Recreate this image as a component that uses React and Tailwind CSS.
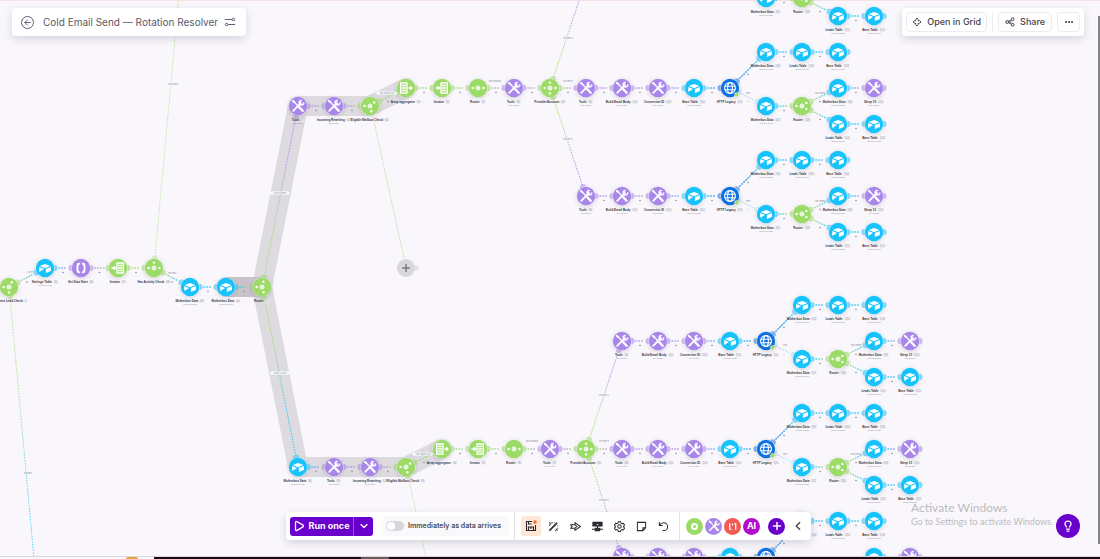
import { ArrowLeft, ChevronDown, ChevronLeft, Lightbulb, Play, Plus } from "lucide-react";

const COLORS = {
  table: "#18c3fb",
  tools: "#a987ea",
  json: "#a987ea",
  router: "#9bdb66",
  aggregator: "#9bdb66",
  iterator: "#9bdb66",
  http: "#0f72e0",
};

// every mailbox branch has the same modules, only its origin changes
function delivery(x, y) {
  const s = 36;
  const h = x + 4 * s;
  const nodes = [
    { x, y, type: "tools", label: "Tools", n: 84 },
    { x: x + s, y, type: "tools", label: "Build Email Body", n: 112 },
    { x: x + 2 * s, y, type: "tools", label: "Conversion ID", n: 113 },
    { x: x + 3 * s, y, type: "table", label: "Base Table", n: 114 },
    { x: h, y, type: "http", label: "HTTP Legacy", n: 115 },
    { x: h + s, y: y - 36, type: "table", label: "Motherbox Data", n: 132 },
    { x: h + 2 * s, y: y - 36, type: "table", label: "Leads Table", n: 133 },
    { x: h + 3 * s, y: y - 36, type: "table", label: "Base Table", n: 134, end: true },
    { x: h + s, y: y + 18, type: "table", label: "Motherbox Data", n: 117 },
    { x: h + 2 * s, y: y + 18, type: "router", label: "Router", n: 118, dots: [180, 35, -35] },
    { x: h + 3 * s, y, type: "table", label: "Motherbox Data", n: 119 },
    { x: h + 4 * s, y, type: "tools", label: "Sleep 10", n: 120, end: true },
    { x: h + 3 * s, y: y + 36, type: "table", label: "Leads Table", n: 121 },
    { x: h + 4 * s, y: y + 36, type: "table", label: "Base Table", n: 122, end: true },
  ];
  const pairs = [[0, 1], [1, 2], [2, 3], [3, 4], [4, 5], [5, 6], [6, 7], [4, 8, 0.3], [8, 9], [9, 10], [10, 11], [9, 12], [12, 13]];
  return { nodes, edges: pairs.map(([a, b, o]) => ({ a: nodes[a], b: nodes[b], opacity: o })) };
}

const start = [
  { x: 9, y: 287, type: "router", label: "Determine Lead Check", n: 2, dots: [180, 90, -60] },
  { x: 45, y: 268, type: "table", label: "Settings Table", n: 45 },
  { x: 81, y: 268, type: "json", label: "Set Data Start", n: 46 },
  { x: 118, y: 268, type: "iterator", label: "Iterator", n: 47 },
  { x: 154, y: 268, type: "router", label: "Has Activity Check", n: 48, dots: [180, 0, -90] },
  { x: 190, y: 287, type: "table", label: "Motherbox Data", n: 49 },
  { x: 226, y: 287, type: "table", label: "Motherbox Data", n: 50 },
  { x: 262, y: 287, type: "router", label: "Router", n: 51, dots: [180, 75, -75] },
];

const upper = [
  { x: 298, y: 106, type: "tools", label: "Tools", n: 8 },
  { x: 334, y: 106, type: "tools", label: "Incoming Rewriting", n: 63 },
  { x: 370, y: 106, type: "router", label: "Eligible Mailbox Check", n: 64, dots: [180, -40, 75] },
  { x: 406, y: 88, type: "aggregator", label: "Array aggregator", n: 65 },
  { x: 442, y: 88, type: "iterator", label: "Iterator", n: 66 },
  { x: 478, y: 88, type: "router", label: "Router", n: 67, dots: [180, 0] },
  { x: 514, y: 88, type: "tools", label: "Tools", n: 68 },
  { x: 550, y: 88, type: "router", label: "Provider/Account", n: 69, dots: [180, 0, 90, -90] },
];

const lower = [
  { x: 298, y: 467, type: "table", label: "Motherbox Data", n: 90 },
  { x: 334, y: 467, type: "tools", label: "Tools", n: 91 },
  { x: 370, y: 467, type: "tools", label: "Incoming Rewriting", n: 92 },
  { x: 406, y: 467, type: "router", label: "Eligible Mailbox Check", n: 93, dots: [180, -40, 75] },
  { x: 442, y: 449, type: "aggregator", label: "Array aggregator", n: 94 },
  { x: 478, y: 449, type: "iterator", label: "Iterator", n: 95 },
  { x: 514, y: 449, type: "router", label: "Router", n: 96, dots: [180, 0] },
  { x: 550, y: 449, type: "tools", label: "Tools", n: 97 },
  { x: 586, y: 449, type: "router", label: "Provider/Account", n: 98, dots: [180, 0, 90, -90] },
];

const branches = [
  delivery(586, -20),
  delivery(586, 88),
  delivery(586, 196),
  delivery(622, 341),
  delivery(622, 449),
  delivery(622, 557),
];

const chain = (list) => list.slice(1).map((b, i) => ({ a: list[i], b }));

// modules scrolled out above the canvas are not rendered
const nodes = [...start, ...upper, ...lower, ...branches.flatMap((b) => b.nodes)].filter((n) => n.y > -12 && n.y < 570);

const edges = [
  ...chain(start),
  ...chain(upper),
  ...chain(lower),
  { a: start[7], b: upper[0] },
  { a: start[7], b: lower[0] },
  { a: upper[7], b: branches[0].nodes[0] },
  { a: upper[7], b: branches[1].nodes[0] },
  { a: upper[7], b: branches[2].nodes[0] },
  { a: lower[8], b: branches[3].nodes[0] },
  { a: lower[8], b: branches[4].nodes[0] },
  { a: lower[8], b: branches[5].nodes[0] },
  { a: start[4], b: { x: 184, y: -60, type: "router" }, opacity: 0.7 },
  { a: start[0], b: { x: 36, y: 580, type: "table" }, opacity: 0.8 },
  { a: lower[3], b: { x: 442, y: 629, type: "router" }, opacity: 0.7 },
  ...branches.flatMap((b) => b.edges),
];

const routeLabels = [
  { x: 280, y: 193, text: "Cold outreach", pill: true },
  { x: 280, y: 373, text: "Follow up due", pill: true },
  { x: 387, y: 93, text: "Has eligible box", pill: true },
  { x: 423, y: 454, text: "Has eligible box", pill: true },
  { x: 173, y: 84, text: "No record" },
  { x: 28, y: 473, text: "Fallback" },
  { x: 30, y: 272, text: "Active" },
  { x: 172, y: 273, text: "Has lead" },
  { x: 568, y: 38, text: "Provider A" },
  { x: 568, y: 139, text: "Provider C" },
  { x: 495, y: 81, text: "Next mailbox" },
  { x: 568, y: 81, text: "Provider B" },
  { x: 532, y: 441, text: "Next mailbox" },
  { x: 604, y: 395, text: "Provider A" },
  { x: 604, y: 441, text: "Provider B" },
  { x: 604, y: 500, text: "Provider C" },
  { x: 748, y: 93, text: "Sent" },
  { x: 748, y: 201, text: "Sent" },
  { x: 785, y: 345, text: "Sent" },
  { x: 785, y: 454, text: "Sent" },
  { x: 820, y: 93, text: "Has thread" },
  { x: 820, y: 201, text: "Has thread" },
  { x: 856, y: 345, text: "Has thread" },
  { x: 856, y: 454, text: "Has thread" },
];

function Edge({ a, b, opacity = 1, index }) {
  const len = Math.hypot(b.x - a.x, b.y - a.y);
  const ux = (b.x - a.x) / len;
  const uy = (b.y - a.y) / len;
  const long = len > 60;
  const gap = long ? 12 : 14;
  return (
    <g opacity={opacity}>
      <linearGradient id={`edge-${index}`} gradientUnits="userSpaceOnUse" x1={a.x} y1={a.y} x2={b.x} y2={b.y}>
        <stop offset="0.3" stopColor={COLORS[a.type]} />
        <stop offset="0.7" stopColor={COLORS[b.type]} />
      </linearGradient>
      <circle cx={a.x + ux * 9.6} cy={a.y + uy * 9.6} r="3" fill={COLORS[a.type]} opacity="0.5" />
      <circle cx={b.x - ux * 9.6} cy={b.y - uy * 9.6} r="3" fill={COLORS[b.type]} opacity="0.5" />
      <line
        x1={a.x + ux * gap}
        y1={a.y + uy * gap}
        x2={b.x - ux * gap}
        y2={b.y - uy * gap}
        stroke={`url(#edge-${index})`}
        strokeWidth={long ? 1.1 : 1.4}
        strokeLinecap="round"
        strokeDasharray={long ? "0.8 2" : "0.6 2.2"}
        opacity={long ? 0.75 : 0.85}
      />
      {!long && <circle cx={(a.x + b.x) / 2} cy={(a.y + b.y) / 2 + 4.5} r="0.8" fill="#8d8b96" />}
    </g>
  );
}

function Glyph({ type, dots = [] }) {
  if (type === "table")
    return (
      <g fill="#fff">
        <path d="M-5.2-1.9 0-4l5.4 2L.1.2z" />
        <path d="M.9 1.1 5.9-.9V3L.9 5z" />
        <path d="M-5.8-1-.9.9-5.8 3.9z" />
      </g>
    );
  if (type === "tools")
    return (
      <g stroke="#fff" fill="none" strokeLinecap="round">
        <path d="M-4.3-4.6 0 0" strokeWidth="1.2" />
        <path d="M-5.3-5.2-3.6-3.8" strokeWidth="1.8" />
        <path d="M1.3 1.3 4.6 4.8" strokeWidth="2.4" />
        <path d="M-4.8 4.8 3 -3" strokeWidth="1.8" />
        <path d="M3.2-5.6A2.3 2.3 0 1 0 5.8-3" strokeWidth="1.5" />
      </g>
    );
  if (type === "json")
    return (
      <g stroke="#fff" fill="none" strokeWidth="1.9" strokeLinecap="round">
        <path d="M-1.8-4.2h-.4q-1.2 0-1.2 1.2v1.5Q-3.4 0-4.6 0q1.2 0 1.2 1.5v1.5q0 1.2 1.2 1.2h.4" />
        <path d="M1.8-4.2h.4q1.2 0 1.2 1.2v1.5Q3.4 0 4.6 0 3.4 0 3.4 1.5v1.5q0 1.2-1.2 1.2h-.4" />
      </g>
    );
  if (type === "http")
    return (
      <g stroke="#fff" fill="none" strokeWidth="1.1">
        <circle r="5.4" />
        <ellipse rx="2.4" ry="5.4" />
        <path d="M-5.2-1.8H5.2M-5.2 1.8H5.2" />
      </g>
    );
  if (type === "router")
    return (
      <g fill="#fff">
        <circle r="2.5" opacity="0.75" />
        {dots.map((deg) => (
          <circle
            key={deg}
            cx={5.4 * Math.cos((deg * Math.PI) / 180)}
            cy={5.4 * Math.sin((deg * Math.PI) / 180)}
            r="1.2"
          />
        ))}
      </g>
    );
  // aggregator points out of the sheet, iterator points into it
  return type === "aggregator" ? (
    <g>
      <path d="M-5.4-5H1V5h-6.400z" fill="none" stroke="#fff" strokeWidth="1.3" />
      <path d="M-4.500-2.500H0M-4.500 0H0M-4.500 2.500H0" stroke="#fff" strokeWidth="1.5" />
      <path d="M2.400 0h3.400M4.200-1.800 6 0 4.200 1.800" stroke="#fff" strokeWidth="1.3" fill="none" />
    </g>
  ) : (
    <g>
      <path d="M-1-5h6.400V5H-1z" fill="none" stroke="#fff" strokeWidth="1.3" />
      <path d="M0-2.500h4.500M0 0h4.500M0 2.500h4.500" stroke="#fff" strokeWidth="1.5" />
      <path d="M-6.600 0h4M-4.200-1.800-2.400 0-4.200 1.800" stroke="#fff" strokeWidth="1.3" fill="none" />
    </g>
  );
}

function Module({ node }) {
  // the lowest row is cut by the window edge, its captions are out of view
  const captioned = node.y < 545;
  return (
    <div
      className="absolute flex w-9 -translate-x-1/2 flex-col items-center"
      style={{ left: node.x, top: node.y - 10 }}
    >
      <svg viewBox="-10 -10 20 20" className="size-5 shrink-0 overflow-visible drop-shadow-sm">
        <circle r="9.8" fill="#f9f7fb" opacity="0.6" />
        <circle r="9.2" fill={COLORS[node.type]} />
        <Glyph type={node.type} dots={node.dots} />
        {node.type === "http" && <circle cx="6.6" cy="6.6" r="2.2" fill="#9bdb66" stroke="#e9f7dc" strokeWidth="0.5" />}
      </svg>
      {captioned && (
        <div className="mt-[2px] flex items-center gap-px font-['Liberation_Sans',sans-serif] whitespace-nowrap text-[3px] leading-[4px] font-bold text-[#3a3843]">
          <span>{node.label}</span>
          <span className="rounded-full bg-[#efedf2] px-px font-normal text-[#a3a1ab]">{node.n}</span>
        </div>
      )}
      {captioned && (node.type === "table" || node.type === "tools") && (
        <div className="font-['Liberation_Sans',sans-serif] whitespace-nowrap text-[2px] leading-[3px] text-[#8d8b96]">
          {node.type === "table" ? "Search records" : "Set variable"}
        </div>
      )}
    </div>
  );
}

function Canvas() {
  return (
    <div className="absolute inset-0 overflow-hidden">
      <svg className="absolute inset-0 h-full w-full">
        <g fill="none" stroke="#dddbdf" strokeWidth="20" strokeLinejoin="round" strokeLinecap="round">
          <path d="M406 88 370 106H298L262 287 298 467H406L442 449" />
          <path d="M226 287H262" stroke="#c7c3c9" />
        </g>
        {edges.map((e, i) => (
          <Edge key={i} index={i} {...e} />
        ))}
        {nodes.filter((n) => n.end).map((n) => (
          <circle key={`${n.x}-${n.y}`} cx={n.x + 9.6} cy={n.y} r="3" fill={COLORS[n.type]} opacity="0.5" />
        ))}
        <path d="M373 117 404 258" stroke="#c3e2a8" strokeWidth="1" strokeDasharray="1.5 1" />
        <circle cx="416" cy="268" r="3" fill="#e6e4e8" />
        <circle cx="406" cy="268" r="9" fill="#d9d7da" />
        <path d="M402 268h8M406 264v8" stroke="#55535b" strokeWidth="1" />
      </svg>
      {routeLabels.map((l) => (
        <span
          key={`${l.x}-${l.y}`}
          style={{ left: l.x, top: l.y }}
          className={`absolute -translate-x-1/2 -translate-y-1/2 whitespace-nowrap rounded-full text-[2px] leading-[3px] text-[#8d8b96] ${l.pill ? "bg-white px-[3px]" : "bg-[#f9f7fb]"}`}
        >
          {l.text}
        </span>
      ))}
      {nodes.map((n) => (
        <Module key={`${n.x}-${n.y}`} node={n} />
      ))}
    </div>
  );
}

function TopBar() {
  return (
    <header className="relative flex items-start justify-between pt-2 pr-4 pl-3">
      <div className="flex h-7 items-center rounded bg-white pr-[10px] pl-[9px] shadow-[0_3px_8px_rgba(40,30,60,0.16)]">
        <button aria-label="Back" className="flex size-[13px] items-center justify-center rounded-full border border-[#5c5a70] text-[#5c5a70]">
          <ArrowLeft className="size-[9px]" strokeWidth={2.5} />
        </button>
        <h1 className="ml-[9px] text-[10px] leading-4 text-[#5b5966]">Cold Email Send — Rotation Resolver</h1>
        <button aria-label="Scenario inputs" className="ml-[6px] text-[#5c5a70]">
          <svg viewBox="0 0 12 12" className="size-3" fill="none" stroke="currentColor" strokeWidth="1">
            <path d="M1 3.5h7M4 8.5h7" />
            <circle cx="9.4" cy="3.5" r="1.3" />
            <circle cx="2.6" cy="8.5" r="1.3" />
          </svg>
        </button>
      </div>

      <div className="flex h-7 items-center gap-[5px] rounded bg-white px-1 text-[9px] font-medium text-[#45434e] shadow-[0_3px_8px_rgba(40,30,60,0.16)]">
        <button className="flex h-5 items-center gap-[5px] rounded-sm border border-[#ececf0] px-[5px]">
          <svg viewBox="0 0 12 12" className="size-[10px]" fill="none" stroke="currentColor" strokeWidth="1.2">
            <path d="M6 1.2 7.5 3v1.5H9L10.8 6 9 7.5H7.5V9L6 10.8 4.5 9V7.5H3L1.2 6 3 4.5h1.5V3z" />
          </svg>
          Open in Grid
        </button>
        <span className="h-5 w-px bg-[#ececf0]" />
        <button className="flex h-5 items-center gap-[5px] rounded-sm border border-[#ececf0] px-[6px]">
          <svg viewBox="0 0 12 12" className="size-[10px]" fill="none" stroke="currentColor" strokeWidth="1.2">
            <circle cx="2.6" cy="6" r="1.7" />
            <circle cx="9.2" cy="2.7" r="1.7" />
            <circle cx="9.2" cy="9.3" r="1.7" />
            <path d="m4.1 5.2 3.6-1.8M4.3 6h3.5M4.1 6.8l3.6 1.8" />
          </svg>
          Share
        </button>
        <button aria-label="More" className="flex h-5 w-[23px] items-center justify-center gap-px rounded-sm border border-[#ececf0]">
          <span className="size-[2px] rounded-full bg-[#33313b]" />
          <span className="size-[2px] rounded-full bg-[#33313b]" />
          <span className="size-[2px] rounded-full bg-[#33313b]" />
        </button>
      </div>
    </header>
  );
}

const tools = [
  {
    name: "Auto-align",
    icon: (
      <>
        <path d="m1.5 10.5 8.5-8.5" strokeWidth="1.8" />
        <path d="M1.5 1.5l2 2M4.5 1v1.5M1 4.5h1.5M8.5 8.5l2 2M8 10v1.2M10 8h1.2M7 1.5l.5.5M10.5 5l.5.5" />
      </>
    ),
  },
  {
    name: "Explain flow",
    icon: <path d="M.8 4.2h4.7V1.8L11.3 6l-5.8 4.2V7.8H.8L2.3 6zM5.5 4.2 7.5 6l-2 1.8" />,
  },
  {
    name: "Notes",
    icon: (
      <>
        <path d="M1 1.5h10v4H1zM3.5 8h5v2.5h-5z" fill="currentColor" />
        <path d="M0 9h3.5M8.5 9H12M6 5v3" />
        <path d="M4.8 4.3 6 3l1.2 1.3z" fill="#fff" stroke="none" />
      </>
    ),
  },
  {
    name: "Settings",
    icon: (
      <>
        <path d="M4.8.8h2.4l.4 1.4 1.4.8 1.4-.4 1.1 2-1 1.1v.9l1 1.1-1.1 2-1.4-.4-1.4.8-.4 1.3H4.8l-.4-1.3L3 9.3l-1.4.4-1.1-2 1-1.1v-.9l-1-1.1 1.1-2L3 3l1.4-.8z" />
        <circle cx="6" cy="6.1" r="1.9" />
      </>
    ),
  },
  {
    name: "Sticky note",
    icon: <path d="M1.5 1.5h9v6l-3 3h-6zM10.5 7.5h-3v3" />,
  },
  {
    name: "Undo",
    icon: <path d="M1.5 1.2v3.6h3.6M1.7 4.6C2.8 2.8 4.5 2 6.3 2a4.2 4.2 0 1 1 0 8.4H5" />,
  },
];

function Toolbar() {
  return (
    <div className="flex h-7 items-center rounded-sm bg-white pr-[7px] pl-1 shadow-[0_3px_8px_rgba(40,30,60,0.16)]">
      <div className="flex h-[19px] overflow-hidden rounded-[3px] bg-[#6a00cc] text-white">
        <button className="flex w-[63px] items-center justify-center gap-[3px] text-[9px] font-bold">
          <Play className="size-3" strokeWidth={2.5} />
          Run once
        </button>
        <button aria-label="Run options" className="flex w-5 items-center justify-center border-l border-[#9a55e0]">
          <ChevronDown className="size-3" strokeWidth={2.5} />
        </button>
      </div>

      <label className="ml-[10px] flex h-5 w-[126px] items-center gap-1 rounded-sm bg-[#f9f9fb] pl-[3px] text-[7px] font-semibold whitespace-nowrap text-[#4b4955]">
        <input type="checkbox" role="switch" className="peer sr-only" />
        <span className="flex h-[10px] w-[18px] shrink-0 items-center rounded-full bg-[#d6d6db] p-px">
          <span className="size-2 rounded-full bg-white" />
        </span>
        Immediately as data arrives
      </label>

      <span className="ml-[5px] h-7 w-px bg-[#e4e3e8]" />

      <div className="ml-[6px] flex items-center gap-[2px] text-[#2b2a33]">
        <button aria-label="Save" className="flex size-5 items-center justify-center rounded-[3px] bg-[#ffe6d5]">
          <svg viewBox="0 0 12 12" className="size-3" fill="none" stroke="currentColor" strokeWidth="1.1">
            <path d="M7 1.5H1.5v9h9V5M3.5 1.5v2.5h3M3.5 10.5V7h5v3.5M6 7v2" />
            <circle cx="10" cy="2" r="1.8" fill="#ff6a2b" stroke="none" />
          </svg>
        </button>
        {tools.map((t) => (
          <button key={t.name} aria-label={t.name} className="flex h-5 w-5 items-center justify-center">
            <svg viewBox="0 0 12 12" className="size-[11px]" fill="none" stroke="currentColor" strokeWidth="1.1">
              {t.icon}
            </svg>
          </button>
        ))}
      </div>

      <span className="ml-[6px] h-7 w-px bg-[#e4e3e8]" />

      <div className="ml-[6px] flex items-center gap-[2px] text-white">
        <button aria-label="Flow control" className="flex size-[17px] items-center justify-center rounded-full bg-[#9bdb66]">
          <span className="size-[7px] rounded-full border-2 border-white" />
        </button>
        <button aria-label="Tools" className="flex size-[17px] items-center justify-center rounded-full bg-[#a987ea]">
          <svg viewBox="-8 -8 16 16" className="size-[14px]">
            <Glyph type="tools" />
          </svg>
        </button>
        <button aria-label="Text parser" className="flex size-[17px] items-center justify-center rounded-full bg-[#f15b55]">
          <svg viewBox="0 0 12 12" className="size-[11px]" fill="none" stroke="currentColor" strokeWidth="1.3">
            <path d="M3 2.5v6.500h2M7.500 3H9.500v6.500M6 3v2" />
          </svg>
        </button>
        <button aria-label="AI tools" className="flex size-[17px] items-center justify-center rounded-full bg-[#b40ccf] text-[9px] font-bold">
          AI
        </button>
        <button aria-label="Add module" className="ml-[6px] flex size-[17px] items-center justify-center rounded-full bg-[#6a00cc]">
          <Plus className="size-3" strokeWidth={3} />
        </button>
      </div>
      <button aria-label="Collapse toolbar" className="ml-[7px] flex size-3 items-center justify-center text-[#3b3944]">
        <ChevronLeft className="size-[14px] shrink-0" strokeWidth={2} />
      </button>
    </div>
  );
}

export default function App() {
  return (
    <div className="flex h-screen flex-col overflow-hidden bg-[#f9f7fb] font-['Inter',sans-serif]">
      <main className="relative flex min-h-0 flex-1 flex-col justify-between shadow-[inset_0_1px_0_#f3e4e2]">
        <Canvas />
        <TopBar />
        <div className="absolute top-4 right-0 bottom-3 w-[2px] bg-[#85838a]" />
        <footer className="relative grid grid-cols-[1fr_auto_1fr] items-end pr-[3px] pb-4">
          <div />
          <Toolbar />
          <div className="flex items-end justify-end gap-[3px] pr-[17px]">
            <div className="mb-3 font-['Lato',sans-serif] whitespace-nowrap text-[#bdbbc0]">
              <p className="text-[12px] leading-4">Activate Windows</p>
              <p className="text-[9px] leading-3">Go to Settings to activate Windows.</p>
            </div>
            <button aria-label="Help" className="mb-[2px] flex size-6 items-center justify-center rounded-full bg-[#6a00cc] text-white">
              <Lightbulb className="size-3" strokeWidth={2.5} />
            </button>
          </div>
        </footer>
      </main>
      <div className="flex h-[3px] shrink-0 border-t border-[#d9d8dc] bg-[#1c0a12]">
        <div className="flex w-[154px] justify-end bg-[#f7f6f8] pr-4">
          <span className="w-3 rounded-t-full bg-[#e8a33a]" />
        </div>
        <div className="ml-[207px] w-7 bg-[#6b5c60]" />
      </div>
    </div>
  );
}
